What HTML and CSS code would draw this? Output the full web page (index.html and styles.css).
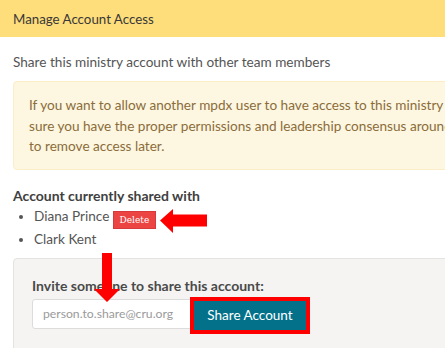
FILE: index.html
```html
<!DOCTYPE html>
<html>
<head>
<meta charset="utf-8">
<link rel="stylesheet" href="styles.css">
</head>
<body>
<div class="page">
  <div class="header">Manage Account Access</div>
  <div class="content">
    <p class="intro">Share this ministry account with other team members</p>
    <div class="alert">If you want to allow another mpdx user to have access to this ministry account, make<br>sure you have the proper permissions and leadership consensus around this decision. You can choose<br>to remove access later.</div>
    <h4 class="shared-title">Account currently shared with</h4>
    <ul class="shared-list">
      <li class="shared-item">Diana Prince <button class="delete-btn">Delete</button></li>
      <li class="shared-item">Clark Kent</li>
    </ul>
    <div class="well">
      <label class="invite-label">Invite someone to share this account:</label>
      <div class="invite-row">
        <input class="invite-input" type="text" placeholder="person.to.share@cru.org">
        <button class="share-btn">Share Account</button>
      </div>
    </div>
    <svg class="arrow-left" width="47" height="24" viewBox="0 0 47 24"><polygon points="0,11.5 13,0 13,5.5 47,5.5 47,17.5 13,17.5 13,24" fill="#ff0000"/></svg>
    <svg class="arrow-down" width="26" height="49" viewBox="0 0 26 49"><polygon points="8,0 18,0 18,36 26,36 13,49 0,36 8,36" fill="#ff0000"/></svg>
  </div>
</div>
</body>
</html>
```

FILE: styles.css
```css
html, body {
  margin: 0;
  padding: 0;
  background: #ffffff;
  overflow: hidden;
}
.page {
  width: 620px;
  font-family: "Lato", "Liberation Sans", sans-serif;
  font-size: 13.6px;
  color: #555555;
}
.header {
  height: 37px;
  background: #fedd7b;
  color: #383838;
  padding: 0 13px;
  display: flex;
  align-items: center;
  font-size: 13.3px;
}
.content {
  position: relative;
  padding: 15px 13px;
}
.intro {
  margin: 0 0 9px 0;
  line-height: 20px;
}
.alert {
  background: #fdf7e1;
  border: 1px solid #fbedc8;
  border-radius: 4px;
  color: #8b6c3a;
  padding: 13px 15px 12px 15px;
  line-height: 20.5px;
  white-space: nowrap;
}
.shared-title {
  margin: 16px 0 0 0;
  font-size: 14px;
  font-weight: bold;
  color: #404040;
  line-height: 20px;
}
.shared-list {
  margin: 0;
  padding-left: 21px;
}
.shared-item {
  line-height: 21px;
}
.delete-btn {
  display: inline-block;
  box-sizing: border-box;
  width: 43px;
  height: 18px;
  padding: 0;
  font-family: "DejaVu Serif", serif;
  font-size: 9px;
  line-height: 16px;
  background: #ec4343;
  color: #fff;
  border: 1px solid #d63a3a;
  vertical-align: -2px;
}
.well {
  margin-top: 8px;
  background: #f5f4f2;
  border: 1px solid #e4e3e1;
  border-radius: 4px;
  padding: 17px 18px 30px 18px;
}
.invite-label {
  display: block;
  font-size: 14px;
  font-weight: bold;
  color: #4a4a4a;
  line-height: 20px;
  margin-bottom: 3px;
}
.invite-row {
  display: flex;
  align-items: flex-start;
}
.invite-input {
  width: 161px;
  height: 30px;
  box-sizing: border-box;
  border: 1px solid #dcdcdc;
  border-radius: 3px 0 0 3px;
  padding: 0 10px;
  font-family: "Lato", sans-serif;
  font-size: 12.2px;
  background: #fff;
}
.invite-input::placeholder {
  color: #9a9a9a;
}
.share-btn {
  font-family: "Lato", sans-serif;
  font-size: 13.5px;
  background: #04718a;
  color: #fff;
  border: none;
  box-shadow: 0 0 0 4px #ff0000;
  width: 112px;
  height: 29px;
  padding: 0;
  margin: 2px 0 0 1px;
}
.arrow-left {
  position: absolute;
  left: 160px;
  top: 172px;
}
.arrow-down {
  position: absolute;
  left: 94px;
  top: 216px;
}
```
